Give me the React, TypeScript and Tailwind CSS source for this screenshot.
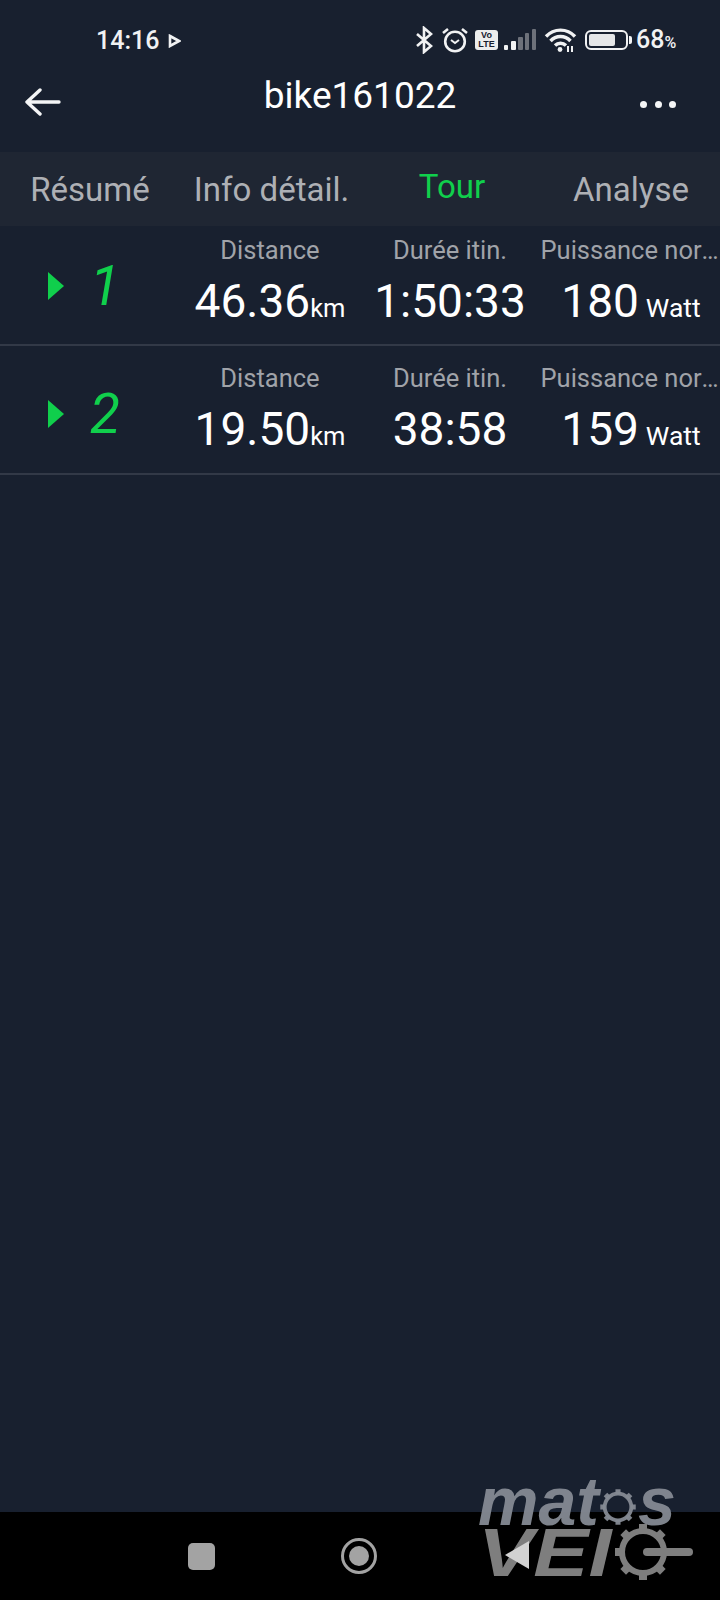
import React from "react"

const laps = [
    { id: 1, distance: "46.36", time: "1:50:33", power: "180", rowClass: "h-[120px] pt-[9px]" },
    { id: 2, distance: "19.50", time: "38:58", power: "159", rowClass: "h-[129px] pt-[17px]" },
]

const Gear = ({ size, className }: { size: number; className: string }) => (
    <svg width={size} height={size} viewBox="0 0 60 60" className={className}>
        <circle cx="30" cy="30" r="21" fill="none" stroke="currentColor" strokeWidth="6" />
        {[0, 45, 90, 135, 180, 225, 270, 315].map((a) => (
            <rect key={a} x="26" y="2" width="8" height="8" fill="currentColor" transform={`rotate(${a} 30 30)`} />
        ))}
    </svg>
)

const StatusIcons = () => (
    <div className="flex items-center">
        <svg width="18" height="28" viewBox="0 0 18 28" fill="none" stroke="#f1f2f3" strokeWidth="2.6" className="ml-[415px]">
            <path d="M2 8l14 12-7 6V2l7 6L2 20" />
        </svg>
        <svg width="28" height="26" viewBox="0 0 28 26" fill="none" stroke="#f1f2f3" strokeWidth="2.6" className="ml-[8px]">
            <circle cx="14" cy="14.5" r="9.8" />
            <path d="M10 13l4 3 4-3" strokeWidth="2" />
            <path d="M2 6l5-4M26 6l-5-4" />
        </svg>
        <div className="ml-[6px] flex h-[20px] w-[23px] flex-col items-center justify-center rounded-[3px] bg-[#eceded] font-['Liberation_Sans',sans-serif] text-[9px] leading-[9px] font-bold text-[#18202f]">
            <span>Vo</span>
            <span>LTE</span>
        </div>
        <svg width="32" height="22" viewBox="0 0 32 22" className="ml-[6px]">
            <rect x="0" y="16" width="4" height="5" rx="1" fill="#f1f2f3" />
            <rect x="7" y="12" width="5" height="9" rx="1" fill="#f1f2f3" />
            <rect x="14" y="8" width="5" height="13" rx="1" fill="#6d717a" />
            <rect x="21" y="4" width="4" height="17" rx="1" fill="#6d717a" />
            <rect x="28" y="0" width="4" height="21" rx="1" fill="#6d717a" />
        </svg>
        <svg width="33" height="25" viewBox="0 0 33 25" fill="none" stroke="#f1f2f3" strokeWidth="3.4" className="ml-[8px]">
            <path d="M2 8.5C10 0 23 0 31 8.5" />
            <path d="M6.5 13C12 7 21 7 26.5 13" />
            <path d="M11 17.5c3-3 8-3 11 0" />
            <circle cx="16" cy="21.5" r="2.4" fill="#f1f2f3" stroke="none" />
            <path d="M24 18v6M28 18v6" strokeWidth="2" />
        </svg>
        <div className="ml-[8px] flex h-[20px] w-[43px] items-center rounded-[6px] border-2 border-[#f1f2f3] px-[2px]">
            <div className="h-[12px] w-[26px] rounded-[2px] bg-[#e6e7e8]" />
        </div>
        <div className="ml-[1px] h-[8px] w-[3px] rounded-r-[2px] bg-[#f1f2f3]" />
        <span className="ml-[4px] text-[25px] font-medium text-[#f1f2f3]">68</span>
        <span className="mt-[6px] text-[16px] font-medium text-[#f1f2f3]">%</span>
    </div>
)

const LapRows = () => (
    <>
        {laps.map((lap) => (
            <div key={lap.id} className={`grid grid-cols-4 border-b-2 border-[#323947] ${lap.rowClass}`}>
                <div className="flex items-center pb-[8px] pl-[48px]">
                    <div className="h-0 w-0 border-y-[14px] border-l-[16px] border-y-transparent border-l-[#10cf4c]" />
                    <span className="w-[72px] pl-[10px] text-center text-[55px] leading-[60px] text-[#10cf4c] italic">{lap.id}</span>
                </div>
                <div className="flex flex-col items-center">
                    <span className="text-[25.5px] leading-[30px] text-[#a0a3a9]">Distance</span>
                    <div className="mt-[9px] flex items-baseline leading-[54px] text-white">
                        <span className="text-[46px]">{lap.distance}</span>
                        <span className="text-[25.5px]">km</span>
                    </div>
                </div>
                <div className="flex flex-col items-center">
                    <span className="text-[25.5px] leading-[30px] text-[#a0a3a9]">Durée itin.</span>
                    <span className="mt-[9px] text-[46px] leading-[54px] text-white">{lap.time}</span>
                </div>
                <div className="flex min-w-0 flex-col items-center">
                    <span className="w-[179px] truncate text-[25.5px] leading-[30px] text-[#a0a3a9]">Puissance normalisée</span>
                    <div className="mt-[9px] flex items-baseline gap-[7px] pl-[2px] leading-[54px] text-white">
                        <span className="text-[46px]">{lap.power}</span>
                        <span className="text-[26.5px]">Watt</span>
                    </div>
                </div>
            </div>
        ))}
    </>
)

const App: React.FC = () => {
    return (
        <div className="relative flex h-[1600px] w-[720px] flex-col overflow-hidden bg-[#18202f] font-['Roboto',sans-serif]">
            {/* status bar */}
            <div className="relative h-[80px] shrink-0">
                <div className="flex h-[80px] items-center">
                    <StatusIcons />
                </div>
                <div className="absolute top-[26px] left-[96px] flex items-center">
                    <span className="text-[25px] leading-[30px] font-medium text-[#f1f2f3]">14:16</span>
                    <svg width="13" height="14" viewBox="0 0 13 14" fill="none" stroke="#f1f2f3" strokeWidth="2.6" className="ml-[9px]">
                        <path d="M2 2l9 5-9 5z" />
                    </svg>
                </div>
            </div>

            {/* title */}
            <div className="relative flex h-[72px] shrink-0 items-center justify-between pr-[44px] pl-[25px]">
                <svg width="36" height="28" viewBox="0 0 36 28" fill="none" stroke="#f4f5f6" strokeWidth="3.4" strokeLinecap="round" strokeLinejoin="round" className="-translate-y-[14px]">
                    <path d="M34 14H2M15 2L2 14l13 12" />
                </svg>
                <span className="absolute top-[-5px] left-0 w-full text-center text-[37px] leading-[42px] text-white">bike161022</span>
                <div className="flex -translate-y-[12px] gap-[7.5px]">
                    <div className="h-[7px] w-[7px] rounded-full bg-[#f4f5f6]" />
                    <div className="h-[7px] w-[7px] rounded-full bg-[#f4f5f6]" />
                    <div className="h-[7px] w-[7px] rounded-full bg-[#f4f5f6]" />
                </div>
            </div>

            {/* tabs */}
            <div className="grid h-[74px] shrink-0 grid-cols-4 items-center bg-[#1f2633] text-center text-[33px] text-[#aeb0b5]">
                <span className="mt-[1px]">Résumé</span>
                <span className="mt-[1px] pl-[3px]">Info détail.</span>
                <span className="-mt-[4px] pl-[4px] text-[#10cf4c]">Tour</span>
                <span className="mt-[1px] pl-[2px]">Analyse</span>
            </div>

            {/* laps */}
            <div className="flex-1">
                <LapRows />
            </div>

            {/* nav bar */}
            <div className="relative flex h-[88px] shrink-0 items-center bg-black">
                <div className="ml-[188px] h-[27px] w-[27px] rounded-[5px] bg-[#a3a3a3]" />
                <div className="ml-[126px] flex h-[36px] w-[36px] items-center justify-center rounded-full border-[3px] border-[#a3a3a3]">
                    <div className="h-[20px] w-[20px] rounded-full bg-[#a3a3a3]" />
                </div>
            </div>

            {/* watermark */}
            <div className="absolute top-[1484px] left-[478px] h-[100px] w-[230px] font-['Liberation_Sans',sans-serif] font-bold text-[#858a94]/95 italic">
                <span className="absolute top-[-3px] left-0 text-[68px] leading-[40px]">mat</span>
                <span className="absolute top-[-3px] left-[160px] text-[68px] leading-[40px]">s</span>
                <Gear size={38} className="absolute top-[4px] left-[121px]" />
                <span className="absolute top-[44px] left-0 origin-left scale-x-[1.2] text-[69px] leading-[50px] text-[#7e7e7e]">VEI</span>
                <Gear size={60} className="absolute top-[38px] left-[135px] text-[#7e7e7e]" />
                <div className="absolute top-[64px] left-[165px] h-[8px] w-[50px] rounded-full bg-[#7e7e7e]" />
                <div className="absolute top-[57px] left-[27px] h-0 w-0 border-y-[14px] border-r-[24px] border-y-transparent border-r-[#d2d2d2]" />
            </div>
        </div>
    )
}

export default App
